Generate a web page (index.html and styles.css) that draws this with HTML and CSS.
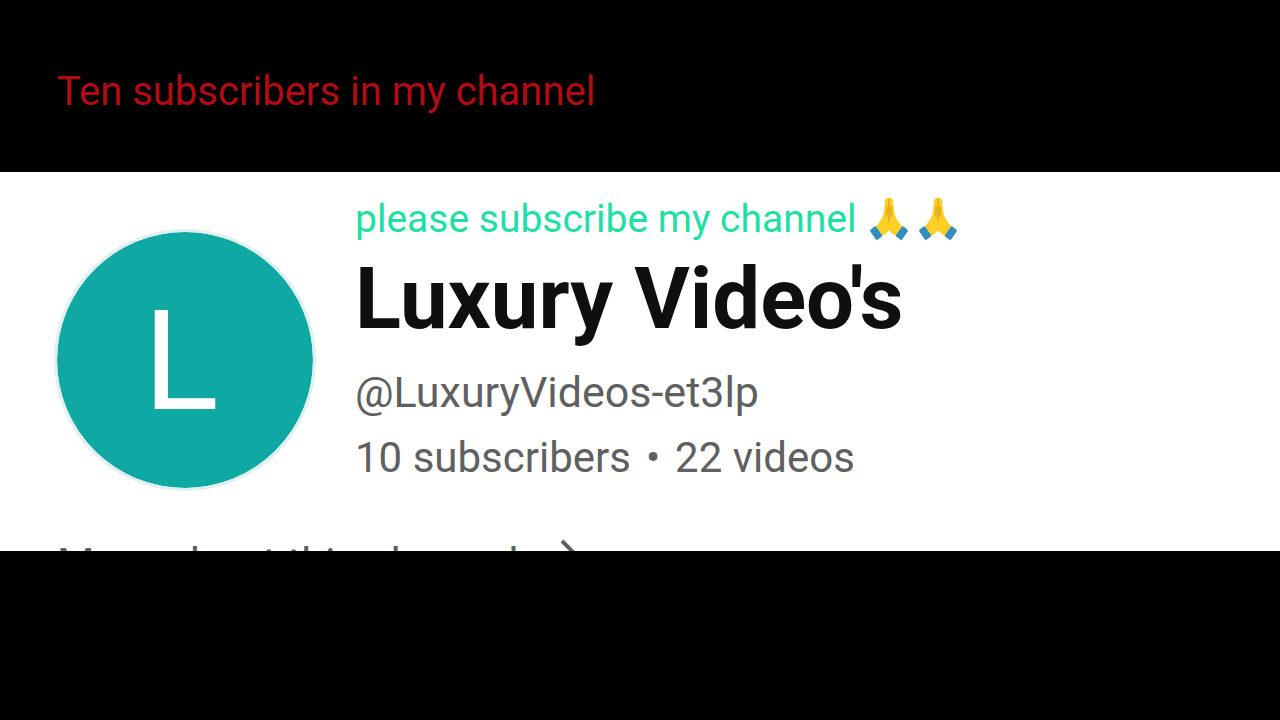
FILE: index.html
```html
<!DOCTYPE html>
<html lang="en">

<head>
    <meta charset="UTF-8">
    <meta name="viewport" content="width=device-width, initial-scale=1.0">
    <title>Luxury Video's</title>
    <link rel="stylesheet" href="styles.css">
</head>

<body>
    <header class="banner">
        <p class="banner-text">Ten subscribers in my channel</p>
    </header>

    <main class="channel">
        <div class="profile">
            <div class="avatar">L</div>
            <div class="info">
                <p class="promo">
                    <span>please subscribe my channel</span>
                    <svg class="hands" viewBox="0 0 40 44" aria-hidden="true">
                        <use href="#hands"></use>
                    </svg>
                    <svg class="hands" viewBox="0 0 40 44" aria-hidden="true">
                        <use href="#hands"></use>
                    </svg>
                </p>
                <h1>Luxury Video's</h1>
                <p class="handle">@LuxuryVideos-et3lp</p>
                <p class="stats">
                    <span>10 subscribers</span>
                    <span>•</span>
                    <span>22 videos</span>
                </p>
            </div>
        </div>
        <a class="more" href="#about">
            <span>More about this channel</span>
            <svg class="chevron" viewBox="0 0 16 28" aria-hidden="true">
                <path d="M2 2l12 12L2 26" />
            </svg>
        </a>
    </main>

    <svg class="sprite" aria-hidden="true">
        <symbol id="hands" viewBox="0 0 40 44">
            <path fill="#fdd025" d="M17 1.5Q19 .3 20 1.5Q21 .3 23 1.5Q24.300 3 24.500 9L25.500 17Q27 22 31 27L34.500 31L28 39.500Q22.500 36.500 20 33.500Q17.500 36.500 12 39.500L5.500 31L9 27Q13 22 14.500 17L15.500 9Q15.700 3 17 1.500z" />
            <path fill="none" stroke="#e0a01c" stroke-width="1.300" stroke-linecap="round" d="M20 2V24M18 10Q18.200 15 17.600 19M22 10Q21.800 15 22.400 19" />
            <path fill="#308fbe" d="M5.500 29.500Q6.500 29 7.300 30L13 38Q13.500 39 12.600 39.700L8.500 42.700Q7.500 43.300 6.700 42.300L1.300 34.500Q.7 33.300 1.700 32.500zM34.500 29.500Q33.500 29 32.700 30L27 38Q26.500 39 27.400 39.700L31.500 42.700Q32.500 43.300 33.300 42.300L38.700 34.500Q39.300 33.300 38.300 32.500z" />
        </symbol>
    </svg>
</body>

</html>
```

FILE: styles.css
```css
* {
    box-sizing: border-box;
}

body {
    font-family: Roboto, Arial, sans-serif;
    background-color: #000;
    margin: 0;
}

h1,
p {
    margin: 0;
}

.banner {
    padding: 68px 57px 56px;
}

.banner-text {
    font-size: 40px;
    line-height: 48px;
    color: #b30b14;
}

.channel {
    background-color: #fff;
    overflow: hidden;
}

.profile {
    display: flex;
    gap: 39px;
    padding: 23px 54px 0;
}

.avatar {
    display: flex;
    justify-content: center;
    align-items: center;
    flex-shrink: 0;
    width: 262px;
    height: 262px;
    margin-top: 34px;
    padding: 2px 8px 0 0;
    border: 3px solid #dff0ee;
    border-radius: 50%;
    background-color: #10a8a3;
    background-clip: padding-box;
    color: #fff;
    font-size: 140px;
}

.promo {
    display: flex;
    align-items: center;
    gap: 9px;
    font-size: 39px;
    line-height: 48px;
    color: #20dfa4;
}

.promo span {
    margin-right: 4px;
}

.hands {
    width: 40px;
    height: 44px;
}

h1 {
    margin-bottom: 4px;
    font-size: 85px;
    line-height: 112px;
    color: #0f0f0f;
}

.handle,
.stats {
    font-size: 43px;
    line-height: 66px;
    color: #606060;
}

.stats {
    display: flex;
    gap: 15px;
    font-size: 42px;
}

/* only the top edge of this row shows */
.more {
    display: flex;
    gap: 41px;
    height: 12px;
    margin-top: 48px;
    padding-left: 57px;
    font-size: 43px;
    line-height: 48px;
    color: #606060;
    text-decoration: none;
}

.chevron {
    width: 16px;
    height: 28px;
    fill: none;
    stroke: #606060;
    stroke-width: 4;
}

.sprite {
    display: none;
}
```
